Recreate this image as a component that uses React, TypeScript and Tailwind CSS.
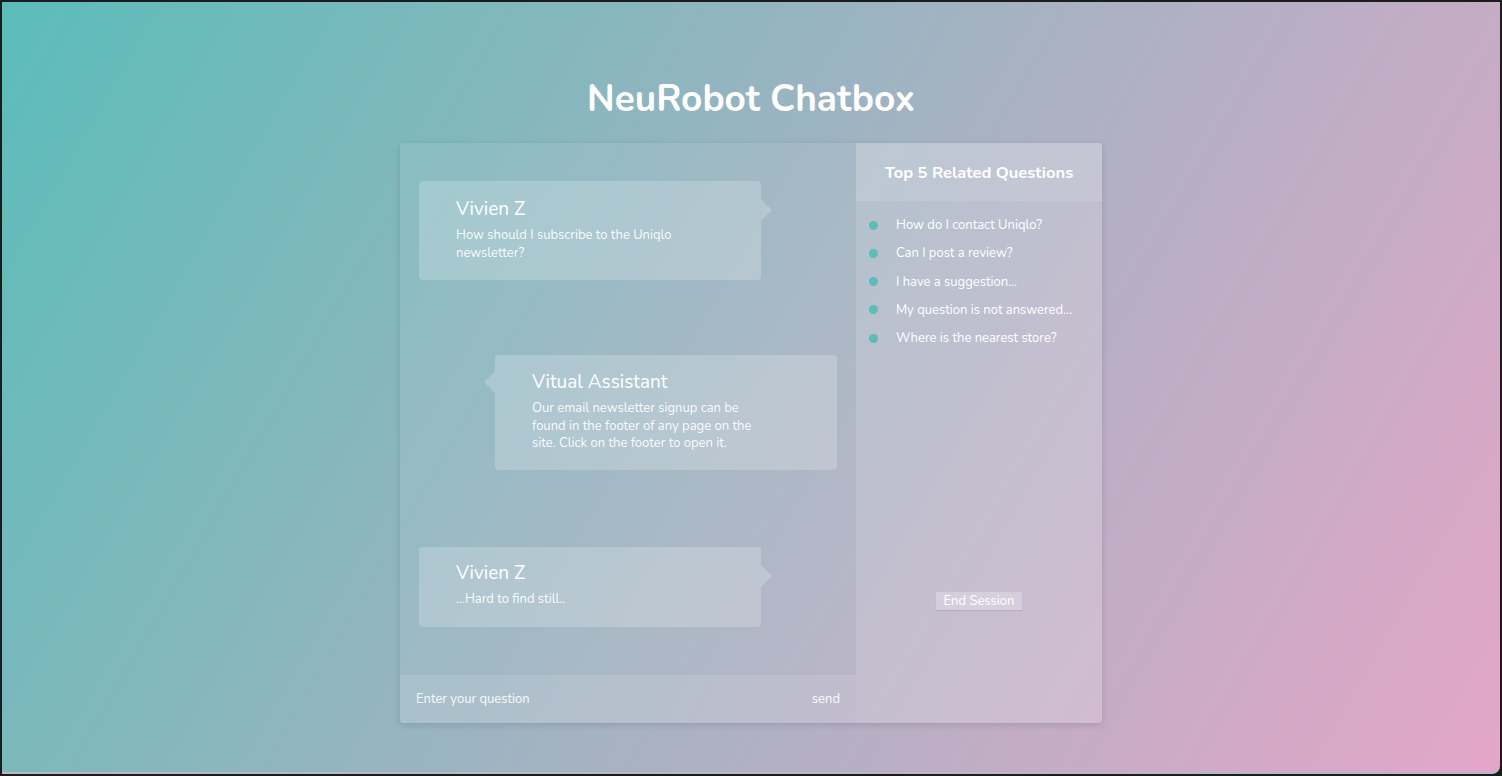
import React from "react";

const questions = [
  "How do I contact Uniqlo?",
  "Can I post a review?",
  "I have a suggestion...",
  "My question is not answered...",
  "Where is the nearest store?",
];

type BubbleProps = {
  name: string;
  text: string;
  side: "left" | "right";
  className?: string;
};

function Bubble({ name, text, side, className = "" }: BubbleProps) {
  return (
    <div className={`relative w-[342px] rounded-[4px] bg-white/20 pl-[37px] ${className}`}>
      {/* little pointer */}
      {side === "right" ? (
        <div className="absolute right-[-11px] top-[18px] h-0 w-0 border-y-[11px] border-l-[11px] border-y-transparent border-l-white/20" />
      ) : (
        <div className="absolute left-[-11px] top-[16px] h-0 w-0 border-y-[11px] border-r-[11px] border-y-transparent border-r-white/20" />
      )}
      <div className="text-[19px] leading-[24px] text-white">{name}</div>
      <p className="mt-[6px] max-w-[222px] text-[13px] leading-[17.5px] text-white/95">{text}</p>
    </div>
  );
}

export default function App() {
  return (
    <div className="h-[776px] w-[1502px] overflow-hidden bg-[#1c1c1c] pl-[2px] pr-[2px] pt-[2px]">
      <div
        className="flex h-[772px] flex-col items-center rounded-br-[8px] bg-[linear-gradient(120deg,#5bbdb8_0%,#a2b3c2_50%,#e4a6c8_100%)] border-b-[2px] border-[#b7b9c4]"
        style={{ fontFamily: "Nunito, Lato, 'Open Sans', sans-serif" }}
      >
        <h1 className="mt-[75px] text-[37px] font-bold leading-[44px] text-white">NeuRobot Chatbox</h1>

        <div className="mt-[22px] flex h-[580px] w-[702px] overflow-hidden rounded-[3px] shadow-[0_2px_6px_rgba(60,60,90,0.18)]">
          {/* chat pane */}
          <div className="flex w-[456px] flex-col bg-white/[0.08]">
            <div className="flex flex-1 flex-col px-[19px] pt-[38px]">
              <Bubble
                side="right"
                name="Vivien Z"
                text="How should I subscribe to the Uniqlo newsletter?"
                className="h-[99px] pt-[16px]"
              />
              <Bubble
                side="left"
                name="Vitual Assistant"
                text="Our email newsletter signup can be found in the footer of any page on the site. Click on the footer to open it."
                className="ml-[76px] mt-[75px] h-[115px] pt-[15px]"
              />
              <Bubble
                side="right"
                name="Vivien Z"
                text="...Hard to find still.."
                className="mt-[77px] h-[80px] pt-[14px]"
              />
            </div>
            <div className="flex h-[48px] items-center justify-between bg-white/10 px-[16px] pt-[2px] text-[13px] text-white/90">
              <span>Enter your question</span>
              <span>send</span>
            </div>
          </div>

          {/* related questions */}
          <div className="flex w-[246px] flex-col bg-white/20">
            <div className="flex h-[58px] items-center justify-center bg-white/10 pt-[2px] text-[16.5px] font-bold text-white">
              Top 5 Related Questions
            </div>
            <ul className="mt-[15px] flex flex-col gap-[10.25px] pl-[13px]">
              {questions.map((q) => (
                <li key={q} className="flex items-center text-[13px] leading-[18px] text-white">
                  <span className="mr-[18px] h-[9px] w-[9px] rounded-full bg-[#5cbcb8]" />
                  {q}
                </li>
              ))}
            </ul>
            <div className="mt-[245px] flex justify-center">
              <button className="h-[18px] bg-white/25 px-[8px] text-[13px] leading-[18px] text-white shadow-[0_1px_1px_rgba(0,0,0,0.08)]">
                End Session
              </button>
            </div>
          </div>
        </div>
      </div>
    </div>
  );
}
